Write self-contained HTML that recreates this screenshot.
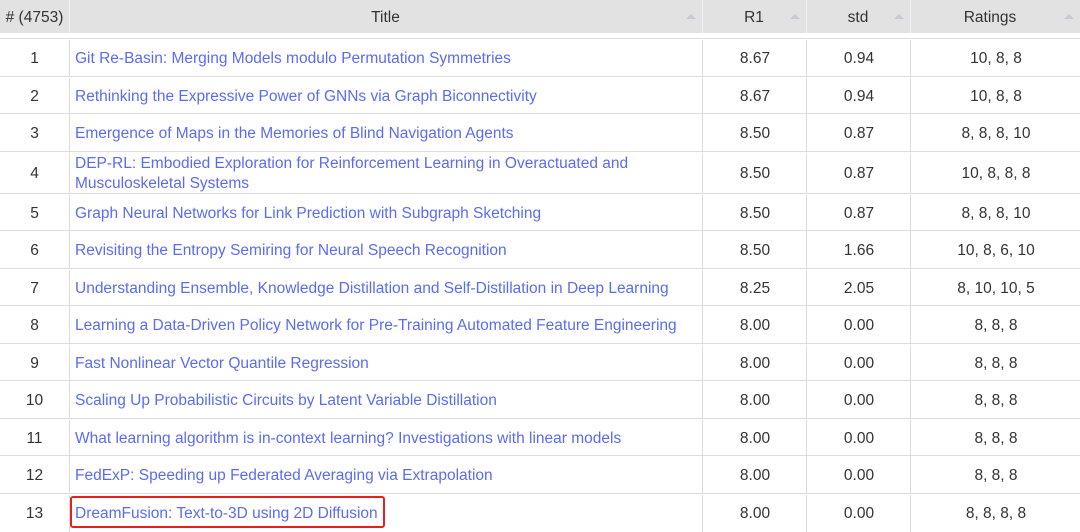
<!DOCTYPE html>
<html><head><meta charset="utf-8"><style>
body{margin:0;width:1080px;height:529px;overflow:hidden;background:#fff;font-family:"Liberation Sans","DejaVu Sans",sans-serif;font-size:15.5px;color:#333}
.hdr{position:absolute;left:0;top:0;width:1080px;height:33px;background:#e2e2e2}
.hdr div{position:absolute;top:0;height:33px;line-height:35px;text-align:center;font-weight:normal;color:#333}
.arr{position:absolute;top:14px;width:0;height:0;border-left:5px solid transparent;border-right:5px solid transparent;border-bottom:5px solid #c5cbd6}
.row{position:absolute;left:0;width:1080px;border-top:1px solid #ddd}
.row div{position:absolute;top:1px;height:100%;display:flex;align-items:center}
.c0{left:0;width:69px;justify-content:center}
.c1{left:69px;width:622px;padding-left:5px;color:#5b6cf2;border-left:1px solid #ddd;line-height:20px}
.c2{left:702px;width:104px;justify-content:center;border-left:1px solid #ddd}
.c3{left:806px;width:104px;justify-content:center;border-left:1px solid #ddd}
.c4{left:910px;width:170px;justify-content:center;border-left:1px solid #ddd}
.vl{position:absolute;top:0;width:1px;height:33px;background:#f2f2f2}
</style></head><body>
<div class="hdr">
<div style="left:0;width:69px">#&nbsp;(4753)</div>
<div style="left:69px;width:633px">Title</div>
<div style="left:702px;width:104px">R1</div>
<div style="left:806px;width:104px">std</div>
<div style="left:910px;width:160px">Ratings</div>
<span class="vl" style="left:69px"></span><span class="vl" style="left:702px"></span><span class="vl" style="left:806px"></span><span class="vl" style="left:910px"></span>
<span class="arr" style="left:686px"></span><span class="arr" style="left:790px"></span><span class="arr" style="left:894px"></span><span class="arr" style="left:1064px"></span>
</div>
<div class="row" style="top:38px;height:37px"><div class="c0">1</div><div class="c1">Git Re-Basin: Merging Models modulo Permutation Symmetries</div><div class="c2">8.67</div><div class="c3">0.94</div><div class="c4">10, 8, 8</div></div>
<div class="row" style="top:76px;height:37px"><div class="c0">2</div><div class="c1">Rethinking the Expressive Power of GNNs via Graph Biconnectivity</div><div class="c2">8.67</div><div class="c3">0.94</div><div class="c4">10, 8, 8</div></div>
<div class="row" style="top:113px;height:37px"><div class="c0">3</div><div class="c1">Emergence of Maps in the Memories of Blind Navigation Agents</div><div class="c2">8.50</div><div class="c3">0.87</div><div class="c4">8, 8, 8, 10</div></div>
<div class="row" style="top:151px;height:41px"><div class="c0">4</div><div class="c1">DEP-RL: Embodied Exploration for Reinforcement Learning in Overactuated and<br>Musculoskeletal Systems</div><div class="c2">8.50</div><div class="c3">0.87</div><div class="c4">10, 8, 8, 8</div></div>
<div class="row" style="top:193px;height:37px"><div class="c0">5</div><div class="c1">Graph Neural Networks for Link Prediction with Subgraph Sketching</div><div class="c2">8.50</div><div class="c3">0.87</div><div class="c4">8, 8, 8, 10</div></div>
<div class="row" style="top:230px;height:37px"><div class="c0">6</div><div class="c1">Revisiting the Entropy Semiring for Neural Speech Recognition</div><div class="c2">8.50</div><div class="c3">1.66</div><div class="c4">10, 8, 6, 10</div></div>
<div class="row" style="top:268px;height:37px"><div class="c0">7</div><div class="c1">Understanding Ensemble, Knowledge Distillation and Self-Distillation in Deep Learning</div><div class="c2">8.25</div><div class="c3">2.05</div><div class="c4">8, 10, 10, 5</div></div>
<div class="row" style="top:305px;height:37px"><div class="c0">8</div><div class="c1">Learning a Data-Driven Policy Network for Pre-Training Automated Feature Engineering</div><div class="c2">8.00</div><div class="c3">0.00</div><div class="c4">8, 8, 8</div></div>
<div class="row" style="top:343px;height:37px"><div class="c0">9</div><div class="c1">Fast Nonlinear Vector Quantile Regression</div><div class="c2">8.00</div><div class="c3">0.00</div><div class="c4">8, 8, 8</div></div>
<div class="row" style="top:380px;height:37px"><div class="c0">10</div><div class="c1">Scaling Up Probabilistic Circuits by Latent Variable Distillation</div><div class="c2">8.00</div><div class="c3">0.00</div><div class="c4">8, 8, 8</div></div>
<div class="row" style="top:418px;height:37px"><div class="c0">11</div><div class="c1">What learning algorithm is in-context learning? Investigations with linear models</div><div class="c2">8.00</div><div class="c3">0.00</div><div class="c4">8, 8, 8</div></div>
<div class="row" style="top:455px;height:37px"><div class="c0">12</div><div class="c1">FedExP: Speeding up Federated Averaging via Extrapolation</div><div class="c2">8.00</div><div class="c3">0.00</div><div class="c4">8, 8, 8</div></div>
<div class="row" style="top:493px;height:37px"><div class="c0">13</div><div class="c1">DreamFusion: Text-to-3D using 2D Diffusion</div><div class="c2">8.00</div><div class="c3">0.00</div><div class="c4">8, 8, 8, 8</div></div>
<div style="position:absolute;left:70px;top:496px;width:311px;height:28px;border:2px solid #e8201c;border-radius:3px"></div>
</body></html>
